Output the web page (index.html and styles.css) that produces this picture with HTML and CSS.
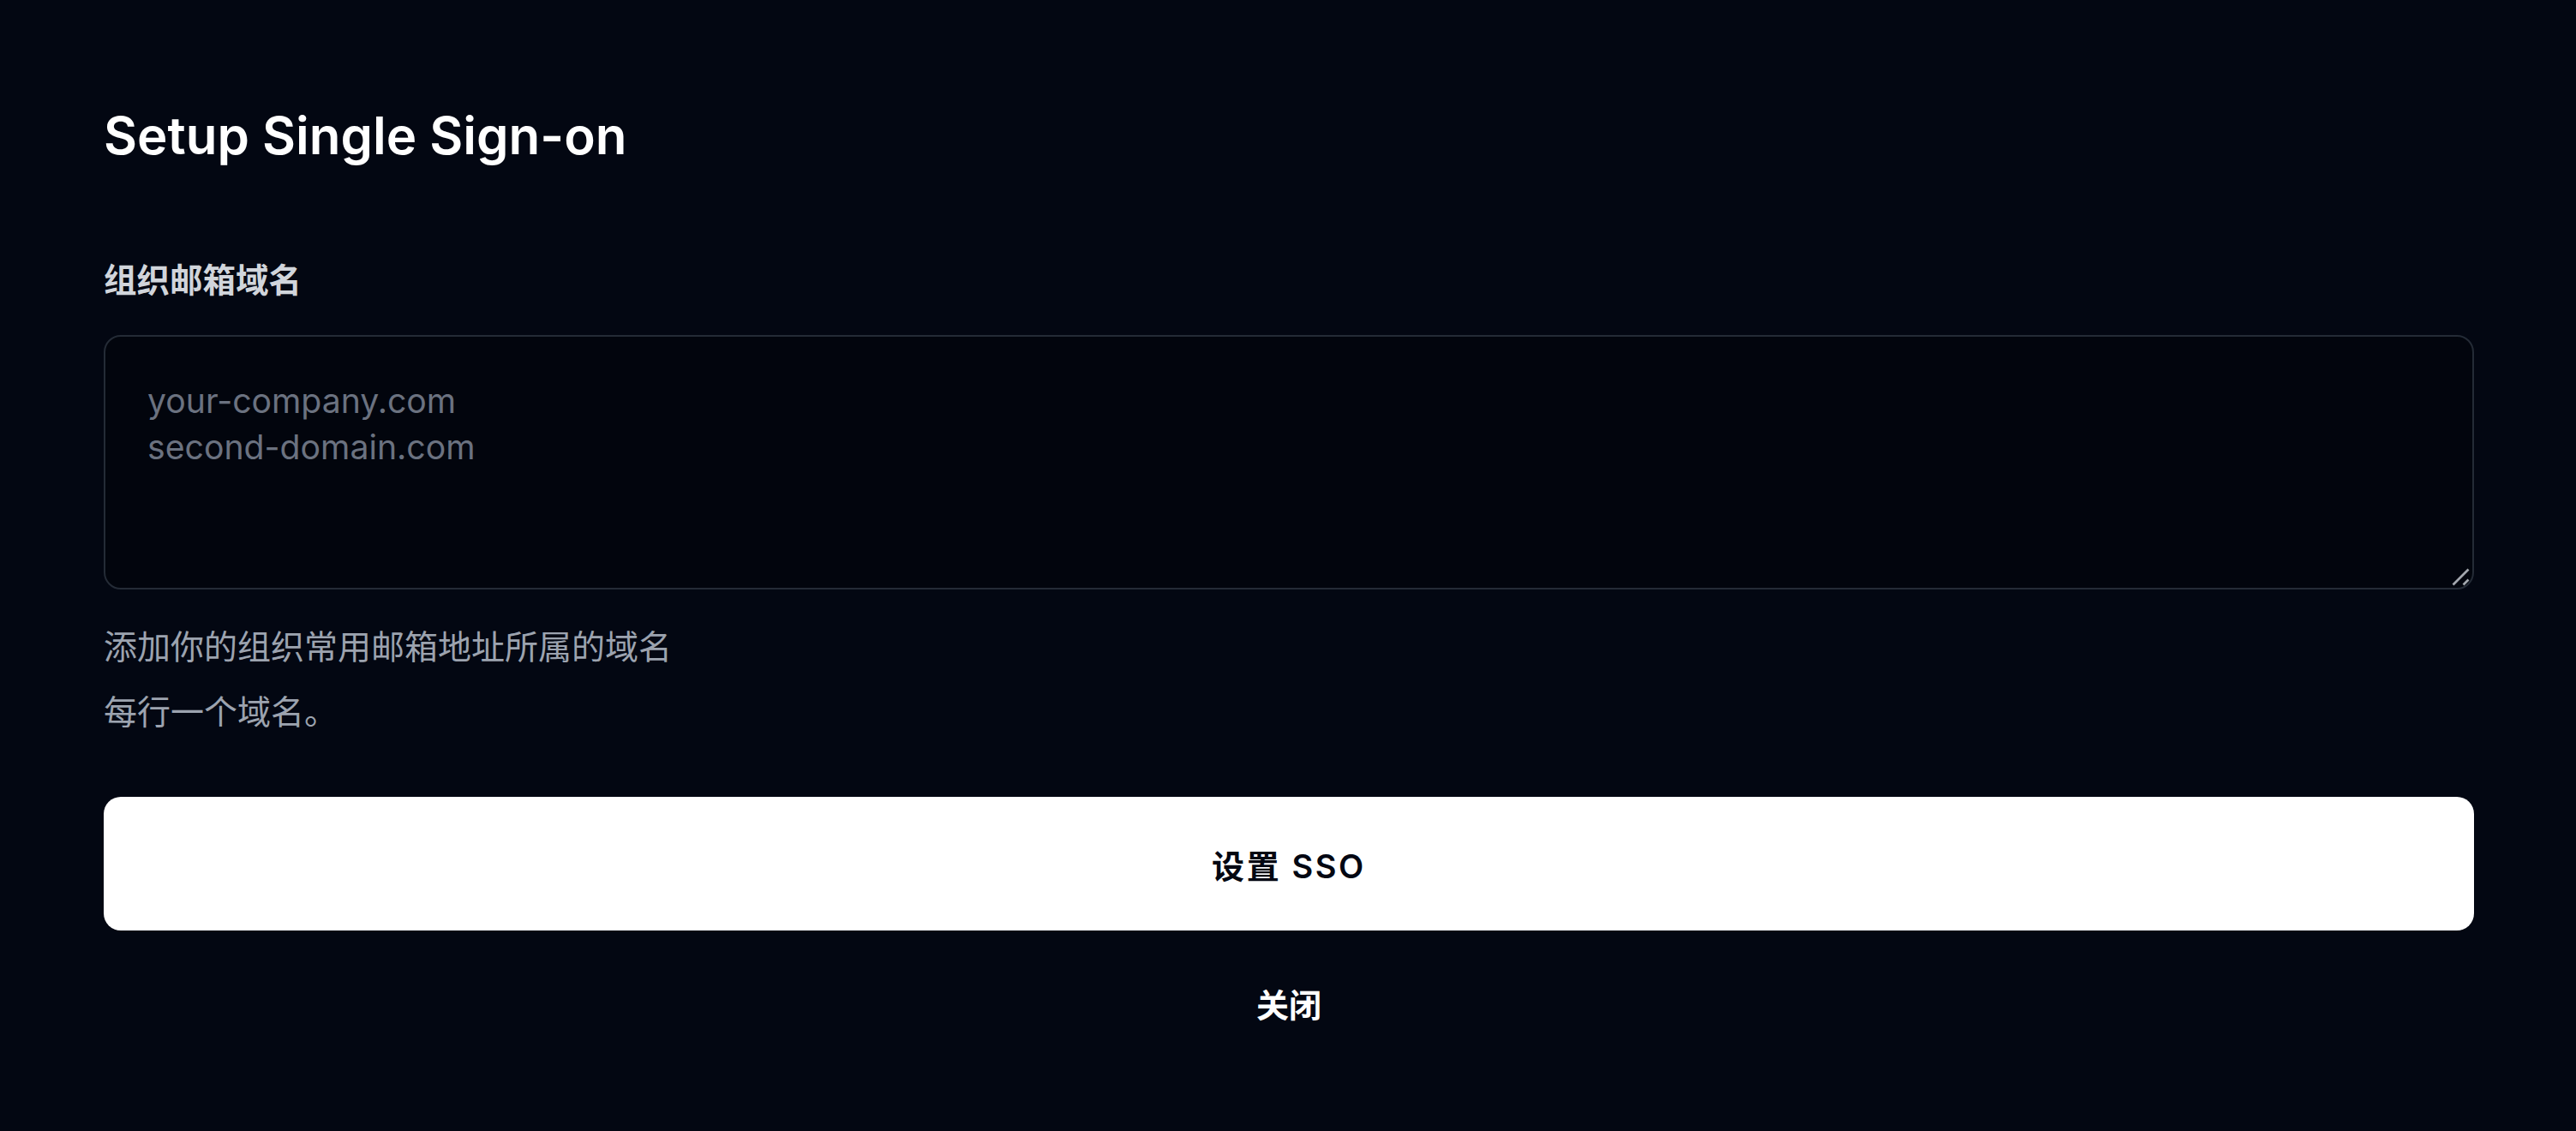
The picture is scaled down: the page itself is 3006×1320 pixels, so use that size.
FILE: index.html
```html
<!DOCTYPE html>
<html lang="zh-CN">
<head>
<meta charset="utf-8">
<title>Setup Single Sign-on</title>
<link rel="stylesheet" href="styles.css">
</head>
<body>
<div class="dialog">
  <h1 class="title">Setup Single Sign-on</h1>
  <label class="label" for="domains">组织邮箱域名</label>
  <div class="field-wrap">
    <textarea id="domains" class="field" placeholder="your-company.com&#10;second-domain.com"></textarea>
    <svg class="grip" width="24" height="24" viewBox="0 0 24 24" aria-hidden="true">
      <line x1="3.5" y1="21.5" x2="21.5" y2="3.5" />
      <line x1="15.5" y1="21.5" x2="21.5" y2="15.5" />
    </svg>
  </div>
  <div class="help">
    <div class="help-line">添加你的组织常用邮箱地址所属的域名</div>
    <div class="help-line">每行一个域名。</div>
  </div>
  <button class="primary" type="button">设置 SSO</button>
  <button class="close" type="button">关闭</button>
</div>
</body>
</html>
```

FILE: styles.css
```css
html, body {
  margin: 0;
  padding: 0;
  background: #030712;
  color-scheme: dark;
}

body {
  width: 3006px;
  height: 1320px;
  overflow: hidden;
  font-family: "Inter", "Noto Sans CJK SC", sans-serif;
}

.dialog {
  display: flex;
  flex-direction: column;
  padding: 122px 119px 0 121px;
}

.title {
  margin: 0;
  font-size: 60px;
  line-height: 72px;
  font-weight: 600;
  color: #ffffff;
}

.label {
  margin-top: 108px;
  font-size: 38.5px;
  line-height: 50px;
  font-weight: 700;
  color: #d1d5db;
}

.field-wrap {
  position: relative;
  margin-top: 39px;
  height: 297px;
}

.field {
  display: block;
  box-sizing: border-box;
  width: 100%;
  height: 297px;
  padding: 48px 48px 48px 49px;
  border: 2px solid #242b36;
  border-radius: 20px;
  background: #02050d;
  color: #e5e7eb;
  font-family: "Inter", "Noto Sans CJK SC", sans-serif;
  font-size: 39.2px;
  line-height: 54px;
  outline: none;
  resize: none;
}

.field::placeholder {
  color: #6b7280;
  opacity: 1;
}

.grip {
  position: absolute;
  right: 4px;
  bottom: 3px;
  stroke: #a3a7ae;
  stroke-width: 2.6;
  stroke-linecap: butt;
  pointer-events: none;
}

.help {
  margin-top: 37px;
  display: flex;
  flex-direction: column;
  gap: 16px;
}

.help-line {
  font-size: 39px;
  line-height: 60px;
  color: #9ca3af;
}

.primary {
  margin-top: 69px;
  height: 156px;
  width: 100%;
  border: none;
  border-radius: 20px;
  background: #ffffff;
  color: #030712;
  font-family: "Inter", "Noto Sans CJK SC", sans-serif;
  font-size: 38px;
  font-weight: 600;
  letter-spacing: 2.6px;
  cursor: pointer;
}

.close {
  margin-top: 57px;
  align-self: center;
  border: none;
  background: transparent;
  padding: 0;
  color: #ffffff;
  font-family: "Inter", "Noto Sans CJK SC", sans-serif;
  font-size: 38px;
  line-height: 60px;
  font-weight: 700;
  cursor: pointer;
}
```
